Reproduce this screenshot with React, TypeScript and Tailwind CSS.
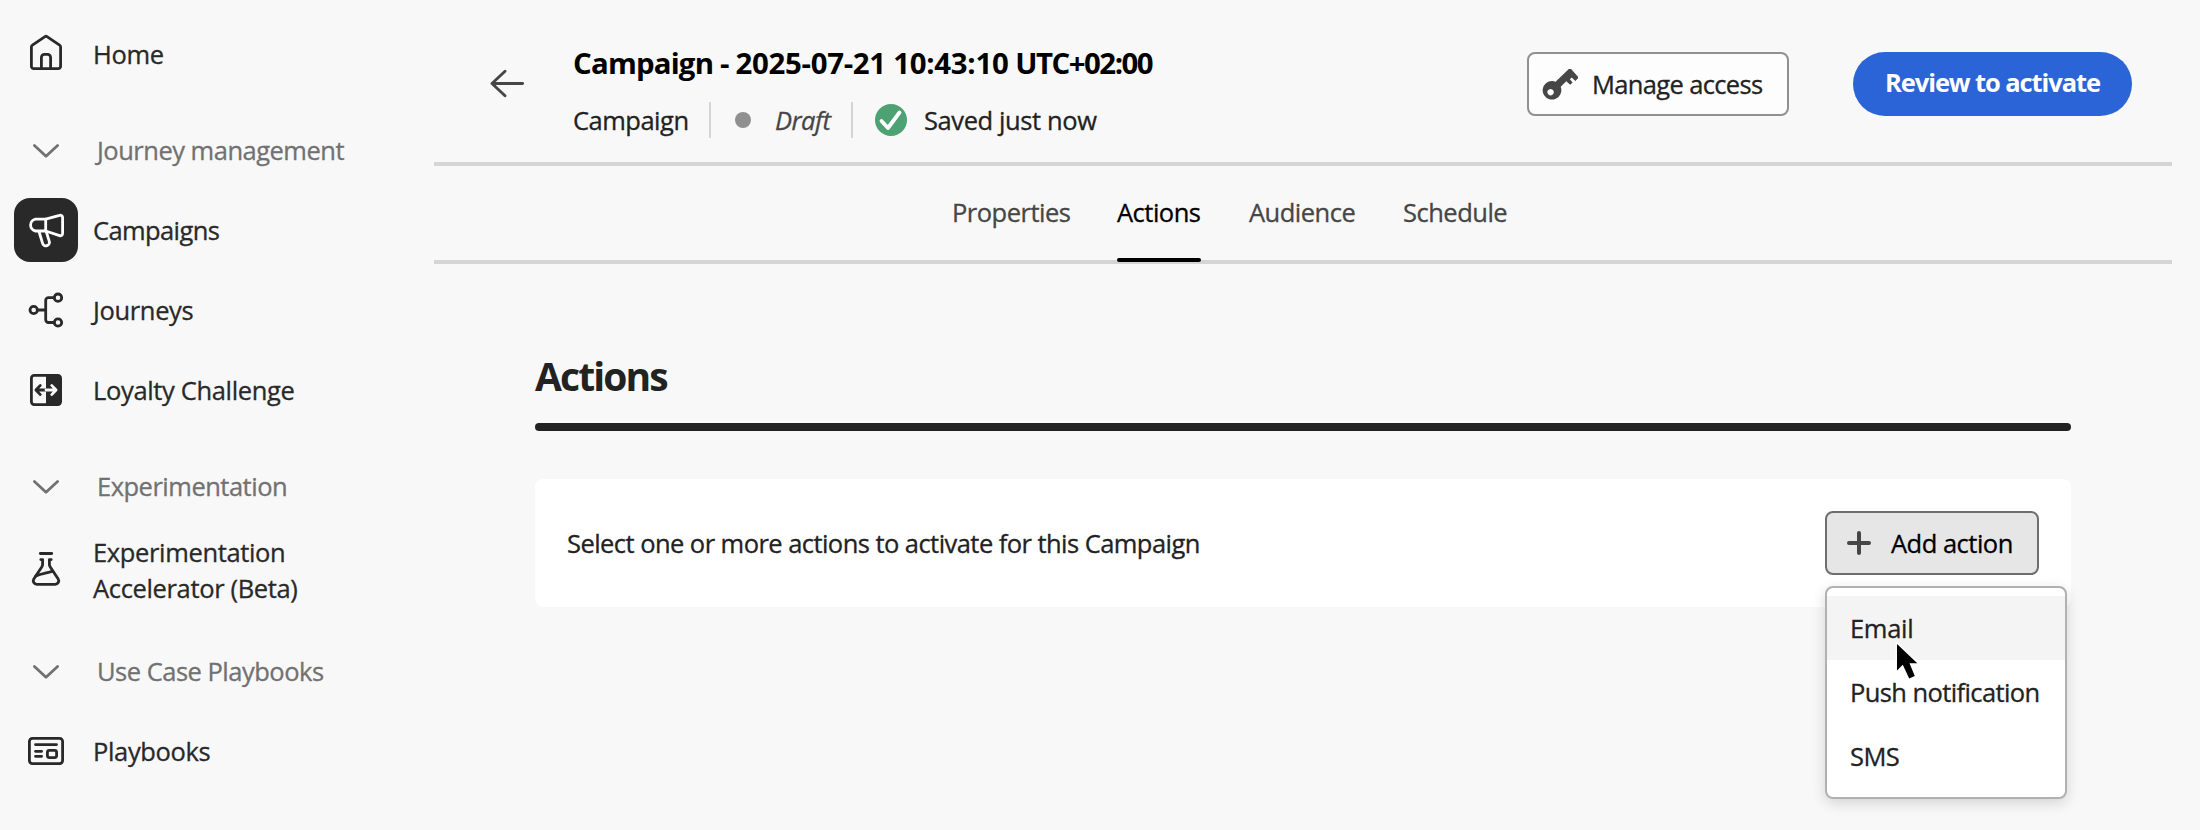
import type { ReactNode } from "react";

function Icon({ children }: { children: ReactNode }) {
  return (
    <svg
      viewBox="0 0 64 64"
      className="size-16 shrink-0"
      fill="none"
      stroke="currentColor"
      strokeWidth={2.8}
      strokeLinecap="round"
      strokeLinejoin="round"
    >
      {children}
    </svg>
  );
}

function HomeIcon() {
  return (
    <Icon>
      <path d="M31 14.6a1.8 1.8 0 0 1 2 0L45.6 23.2a2.2 2.2 0 0 1 1 1.8V44.2a2.4 2.4 0 0 1-2.4 2.4H19.8a2.4 2.4 0 0 1-2.4-2.4V25a2.2 2.2 0 0 1 1-1.8Z" />
      <path d="M27.4 46V35.4a3 3 0 0 1 3-3h3.2a3 3 0 0 1 3 3V46" />
    </Icon>
  );
}

function ChevronIcon() {
  return (
    <Icon>
      <path d="M20.4 27.4L32 38.2L43.6 27.4" />
    </Icon>
  );
}

function MegaphoneIcon() {
  return (
    <Icon>
      <path d="M31.7 21.2H21.5a6 6 0 0 0 0 11.8H31.7Z" />
      <path d="M31.7 21.2L45.6 17.4a2.3 2.3 0 0 1 3 2.2V35.4a2.3 2.3 0 0 1-3 2.2L31.7 33" />
      <path d="M25 33.5L28.6 45.4a3.4 3.4 0 0 0 6.7-2.1L32.2 33.5" />
    </Icon>
  );
}

function JourneyIcon() {
  return (
    <Icon>
      <circle cx="19.7" cy="32" r="3.7" />
      <circle cx="44" cy="19.7" r="3.7" />
      <circle cx="44" cy="44.5" r="3.7" />
      <path d="M23.5 32H31.5M40 19.7H34.5a2.8 2.8 0 0 0-2.8 2.8V41.7a2.8 2.8 0 0 0 2.8 2.8H40" />
    </Icon>
  );
}

function LoyaltyIcon() {
  return (
    <Icon>
      <rect x="17.4" y="17.4" width="29.2" height="29.2" rx="2.8" />
      <path d="M32 17H44a3 3 0 0 1 3 3V44a3 3 0 0 1-3 3H32Z" fill="currentColor" stroke="none" />
      <path d="M32 32H23M26.3 27.4L21.9 32L26.3 36.6" />
      <path d="M32 32H41M37.7 27.4L42.1 32L37.7 36.6" stroke="#f8f8f8" />
    </Icon>
  );
}

function FlaskIcon() {
  return (
    <Icon>
      <path d="M26.3 15.5H37.7" />
      <path d="M26.8 21.6H28.6V26.5a4 4 0 0 1-.7 2.2L19.8 41a3.5 3.5 0 0 0 3 5.3H41.2a3.5 3.5 0 0 0 3-5.3L36.1 28.7a4 4 0 0 1-.7-2.2V21.6H37.2" />
      <path d="M21.8 38.1C28 35.2 32 35.5 38.8 33.2" />
    </Icon>
  );
}

function PlaybookIcon() {
  return (
    <Icon>
      <rect x="15.4" y="19.4" width="33.2" height="25.2" rx="3" />
      <path d="M21.5 25.6H42.5M21.5 32.3H27.6M21.5 37.3H27.6" />
      <rect x="33.4" y="31.4" width="9.2" height="7.2" rx="2" />
    </Icon>
  );
}

function NavItem({ icon, label, active = false }: { icon: ReactNode; label: ReactNode; active?: boolean }) {
  return (
    <a className="flex h-16 items-center gap-[15px] text-[#292929]">
      <span className={active ? "rounded-2xl bg-[#292929] text-white" : ""}>{icon}</span>
      <span className={active ? "leading-9 tracking-[-0.6px]" : "leading-9"}>{label}</span>
    </a>
  );
}

function NavSection({ label }: { label: string }) {
  return (
    <div className="flex h-16 items-center gap-[19px] tracking-[-0.5px] text-[#717171]">
      <ChevronIcon />
      <span>{label}</span>
    </div>
  );
}

function Sidebar() {
  return (
    <nav className="w-[434px] shrink-0 pt-[22px] pl-[14px] tracking-[-0.35px]">
      <NavItem icon={<HomeIcon />} label="Home" />
      <div className="mt-8 flex flex-col gap-4">
        <NavSection label="Journey management" />
        <NavItem icon={<MegaphoneIcon />} label="Campaigns" active />
        <NavItem icon={<JourneyIcon />} label="Journeys" />
        <NavItem icon={<LoyaltyIcon />} label="Loyalty Challenge" />
      </div>
      <div className="mt-8 flex flex-col gap-5">
        <NavSection label="Experimentation" />
        <NavItem
          icon={<FlaskIcon />}
          label={
            <>
              Experimentation
              <br />
              Accelerator (Beta)
            </>
          }
        />
      </div>
      <div className="mt-[37px] flex flex-col gap-4">
        <NavSection label="Use Case Playbooks" />
        <NavItem icon={<PlaybookIcon />} label="Playbooks" />
      </div>
    </nav>
  );
}

function Header() {
  return (
    <header className="flex h-[166px] items-start border-b-4 border-[#d5d5d5]">
      <svg
        viewBox="0 0 36 36"
        className="mt-[66px] ml-[55px] size-9 shrink-0 text-[#464646]"
        fill="none"
        stroke="currentColor"
        strokeWidth={2.9}
        strokeLinecap="round"
        strokeLinejoin="round"
      >
        <path d="M33.6 17.5H3M16 5.3L3 17.5L16 29.8" />
      </svg>
      <div className="ml-12 pt-[41px]">
        <h1 className="text-[29.4px] leading-[44px] font-bold tracking-[-0.8px] text-black [-webkit-text-stroke:0px]">
          Campaign - <span className="tracking-[-0.3px]">2025-07-21 10:43:10</span>{" "}
          <span className="tracking-[-1.5px]">UTC+02:00</span>
        </h1>
        <div className="mt-[17px] flex h-9 items-center text-[#222222]">
          <span className="w-[116px]">Campaign</span>
          <span className="ml-5 h-9 w-0.5 bg-[#d5d5d5]" />
          <span className="ml-6 size-4 rounded-full bg-[#909090]" />
          <span className="ml-6 w-[57px] text-[#464646] italic">Draft</span>
          <span className="ml-[19px] h-9 w-0.5 bg-[#d5d5d5]" />
          <svg viewBox="0 0 32 32" className="ml-[22px] size-8" fill="none">
            <circle cx="16" cy="16" r="16" fill="#4da273" />
            <path d="M6.5 17L13 24L24.5 8.5" stroke="white" strokeWidth={3.8} strokeLinecap="round" strokeLinejoin="round" />
          </svg>
          <span className="ml-[17px] tracking-[-0.4px]">Saved just now</span>
        </div>
      </div>
      <div className="ml-auto flex gap-16 pt-[52px] pr-10">
        <button className="flex h-16 w-[262px] items-center gap-[14px] rounded-lg border-2 border-[#909090] bg-[#fdfdfd] pl-[13px] text-[#222222]">
          <svg viewBox="0 0 36 36" className="size-9" fill="#464646">
            <path
              fillRule="evenodd"
              d="M10 15a9.3 9.3 0 1 0 8.4 13.2a9.3 9.3 0 0 0 .3-7.5L24.3 15.2L28.2 18.8L30.6 16.4L27.9 13.3L29.8 11.5L33.4 14.9L36.7 11.6L29.1 3.1L26.8 3L13.6 15.7A9.3 9.3 0 0 0 10 15ZM8.6 23a3.2 3.2 0 1 1-.01 0Z"
            />
          </svg>
          <span className="tracking-[-0.65px]">Manage access</span>
        </button>
        <button className="flex h-16 w-[279px] items-center justify-center rounded-full bg-[#2a64d6] pb-1 font-bold tracking-[-1.1px] text-white [-webkit-text-stroke:0px]">
          Review to activate
        </button>
      </div>
    </header>
  );
}

const tabs = [
  { label: "Properties", width: "w-[117px]" },
  { label: "Actions", width: "w-[84px]" },
  { label: "Audience", width: "w-[106px]" },
  { label: "Schedule", width: "w-[106px]" },
];

function Tabs() {
  return (
    <div className="flex h-[98px] gap-12 border-b-4 border-[#d5d5d5] pl-[518px]">
      {tabs.map((tab) => {
        const active = tab.label === "Actions";
        return (
          <div key={tab.label} className={`relative pt-[26px] leading-10 ${tab.width} ${active ? "text-black" : "text-[#464646]"}`}>
            {tab.label}
            {active && <div className="absolute -bottom-0.5 left-0 h-1 w-full rounded-sm bg-black" />}
          </div>
        );
      })}
    </div>
  );
}

function ActionMenu() {
  return (
    <div className="absolute top-[75px] left-0 w-[242px] rounded-lg border-2 border-[#b1b1b1] bg-white pt-2 pb-[9px] text-[#222222] shadow-[0_4px_14px_rgba(0,0,0,0.15)]">
      {["Email", "Push notification", "SMS"].map((item) => (
        <div key={item} className={`flex h-16 items-center pl-[23px] ${item === "Email" ? "bg-[#f4f4f4] tracking-[-0.3px]" : "tracking-[-0.6px]"}`}>
          {item}
        </div>
      ))}
      <svg viewBox="0 0 30 42" className="absolute top-[52px] left-[66px] h-[42px] w-[30px]">
        <path d="M4 4V30.5L9.8 24.8L16.2 38.6L21.8 36L16.5 23.3H24.3Z" fill="black" stroke="white" strokeOpacity={0.7} strokeWidth={3} paintOrder="stroke" />
      </svg>
    </div>
  );
}

function ActionsPanel() {
  return (
    <section className="px-[101px] pt-[84px]">
      <h2 className="text-[39px] leading-[56px] font-bold tracking-[-1.9px] text-[#222222] [-webkit-text-stroke:0px]">Actions</h2>
      <div className="mt-[19px] h-2 rounded-full bg-[#222222]" />
      <div className="mt-12 flex h-32 items-center justify-between rounded-lg bg-white px-8 text-[#222222]">
        <span className="tracking-[-0.55px]">Select one or more actions to activate for this Campaign</span>
        <div className="relative">
          <button className="flex h-16 w-[214px] items-center gap-5 rounded-lg border-2 border-[#6e6e6e] bg-[#e6e6e6] pl-5 text-black">
            <svg viewBox="0 0 24 24" className="size-6" stroke="#464646" strokeWidth={4} strokeLinecap="round">
              <path d="M12 2V22M2 12H22" />
            </svg>
            <span>Add action</span>
          </button>
          <ActionMenu />
        </div>
      </div>
    </section>
  );
}

export default function App() {
  return (
    <div className="flex h-[830px] w-[2200px] overflow-hidden bg-[#f8f8f8] font-['Open_Sans',sans-serif] text-[25.5px] tracking-[-0.5px] whitespace-nowrap [-webkit-text-stroke:0.3px]">
      <Sidebar />
      <main className="w-[1738px]">
        <Header />
        <Tabs />
        <ActionsPanel />
      </main>
    </div>
  );
}
